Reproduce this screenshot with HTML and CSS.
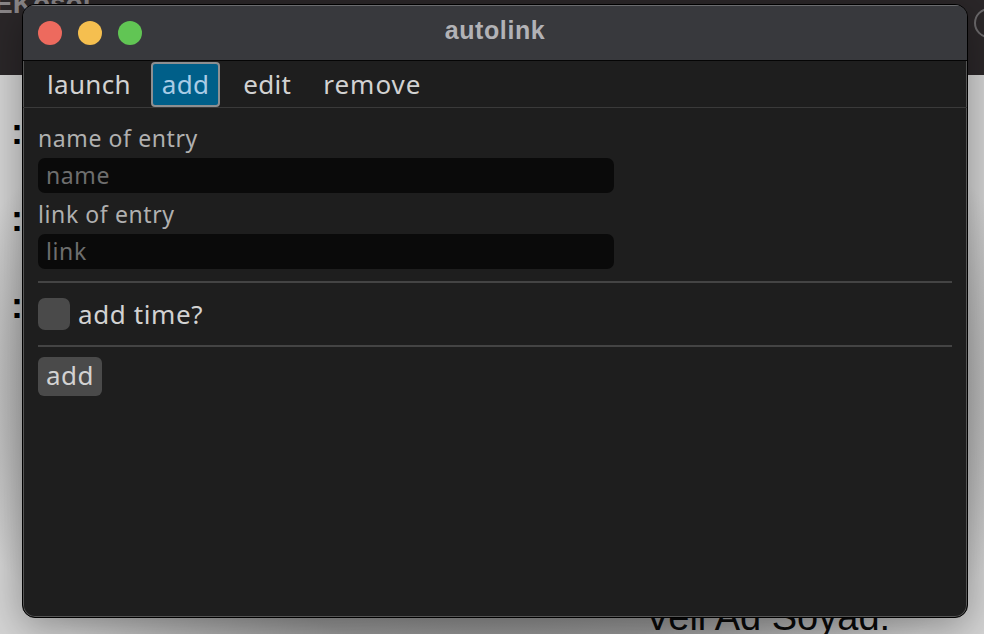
FILE: index.html
```html
<!DOCTYPE html>
<html>
<head>
<meta charset="utf-8">
<link rel="stylesheet" href="styles.css">
</head>
<body>
<div class="desktop">
  <div class="topstrip"><span class="bgtitle">EKosoi</span><span class="bgring"></span></div>
  <div class="bgpage">
    <div class="colons">
      <span class="colon">:</span>
      <span class="colon">:</span>
      <span class="colon">:</span>
    </div>
    <div class="bgname">Veli Ad Soyad:</div>
  </div>

  <div class="window">
    <div class="titlebar">
      <div class="lights">
        <span class="light red"></span>
        <span class="light yellow"></span>
        <span class="light green"></span>
      </div>
      <div class="title">autolink</div>
    </div>
    <div class="tabs">
      <span class="tab">launch</span>
      <span class="tab active">add</span>
      <span class="tab">edit</span>
      <span class="tab">remove</span>
    </div>
    <div class="content">
      <div class="label">name of entry</div>
      <div class="input">name</div>
      <div class="label">link of entry</div>
      <div class="input">link</div>
      <div class="sep first"></div>
      <div class="checkrow">
        <span class="checkbox"></span>
        <span class="checklabel">add time?</span>
      </div>
      <div class="sep"></div>
      <div class="btnrow"><span class="button">add</span></div>
    </div>
  </div>
</div>
</body>
</html>
```

FILE: styles.css
```css
html, body {
  margin: 0;
  padding: 0;
}
body {
  width: 984px;
  height: 634px;
  overflow: hidden;
  font-family: "Noto Sans", "Open Sans", sans-serif;
}
.desktop {
  position: relative;
  width: 984px;
  height: 634px;
  background: #d6d6d6;
  overflow: hidden;
}
.topstrip {
  height: 75px;
  background: #2b2729;
  position: relative;
}
.bgtitle {
  position: absolute;
  left: -6px;
  top: -12px;
  font-family: "Liberation Sans", sans-serif;
  font-weight: bold;
  font-size: 28px;
  color: #8a8688;
}
.bgring {
  position: absolute;
  right: -20px;
  top: 8px;
  width: 26px;
  height: 26px;
  border: 2px solid #6c6a6c;
  border-radius: 50%;
}
.bgpage {
  position: absolute;
  left: 0;
  top: 75px;
  right: 0;
  bottom: 0;
  background: radial-gradient(ellipse 560px 380px at 495px 310px, #6a6a6a 0%, #9a9a9a 70%, #d4d4d4 100%);
}
.colons {
  position: absolute;
  left: 11px;
  top: 38px;
  display: flex;
  flex-direction: column;
  gap: 50px;
}
.colon {
  font-family: "Liberation Sans", sans-serif;
  font-weight: bold;
  font-size: 36px;
  line-height: 37px;
  color: #000;
}
.bgname {
  position: absolute;
  left: 645px;
  top: 521px;
  font-family: "Liberation Sans", sans-serif;
  font-size: 38px;
  color: #0a0a0a;
}
.window {
  position: absolute;
  left: 22px;
  top: 4px;
  width: 944px;
  height: 612px;
  border: 1px solid #000;
  border-radius: 13px;
  background: #1e1e1e;
  box-shadow: inset 0 0 0 1px #555, 0 10px 40px rgba(0,0,0,0.35);
  overflow: hidden;
  display: flex;
  flex-direction: column;
}
.titlebar {
  height: 55px;
  background: #38393d;
  border-bottom: 1px solid #050505;
  box-shadow: inset 0 1px 0 #6a6b6e;
  position: relative;
  display: flex;
  align-items: center;
  justify-content: center;
  flex-shrink: 0;
}
.lights {
  position: absolute;
  left: 15px;
  top: 16px;
  display: flex;
  gap: 16px;
}
.light {
  width: 24px;
  height: 24px;
  border-radius: 50%;
}
.red { background: #ed6a5e; }
.yellow { background: #f5bf4f; }
.green { background: #61c554; }
.title {
  font-family: "Liberation Sans", sans-serif;
  font-weight: bold;
  font-size: 25px;
  color: #b2b2b6;
  letter-spacing: 0.6px;
  margin-top: -4px;
}
.tabs {
  height: 46px;
  border-bottom: 1px solid #3a3a3a;
  display: flex;
  align-items: center;
  padding-left: 15px;
  flex-shrink: 0;
}
.tab {
  font-size: 26px;
  color: #d2d2d2;
  padding: 0 8px;
  height: 42px;
  line-height: 40px;
  margin-right: 14px;
  box-sizing: border-box;
  border: 1px solid transparent;
  border-radius: 4px;
  letter-spacing: 0.3px;
}
.tab.active {
  background: #005f89;
  border: 2px solid #8d8f91;
  color: #a9cce6;
  height: 45px;
  line-height: 40px;
  padding: 0 9px;
  margin-left: -3px;
  margin-right: 14px;
}
.tab:last-child {
  letter-spacing: 1px;
}
.content {
  padding: 13px 15px 0 15px;
  display: flex;
  flex-direction: column;
}
.label {
  font-size: 23px;
  color: #b0b0b0;
  line-height: 34px;
  height: 37px;
  letter-spacing: 0.6px;
}
.input {
  width: 568px;
  height: 35px;
  background: #0a0a0a;
  border-radius: 7px;
  color: #6e6e6e;
  font-size: 23px;
  line-height: 34px;
  padding-left: 8px;
  margin-bottom: 4px;
  letter-spacing: 0.6px;
}
.sep {
  height: 2px;
  background: #444;
  width: 914px;
}
.sep.first { margin-top: 8px; }
.checkrow {
  display: flex;
  align-items: center;
  height: 62px;
  gap: 8px;
}
.checkbox {
  width: 32px;
  height: 32px;
  border-radius: 7px;
  background: #4a4a4a;
}
.checklabel {
  font-size: 26px;
  color: #d2d2d2;
  letter-spacing: 0.6px;
}
.btnrow {
  padding-top: 10px;
  display: flex;
}
.button {
  background: #4a4a4a;
  border-radius: 6px;
  font-size: 26px;
  color: #d2d2d2;
  padding: 0 8px;
  height: 39px;
  line-height: 37px;
  letter-spacing: 0.4px;
}
```
